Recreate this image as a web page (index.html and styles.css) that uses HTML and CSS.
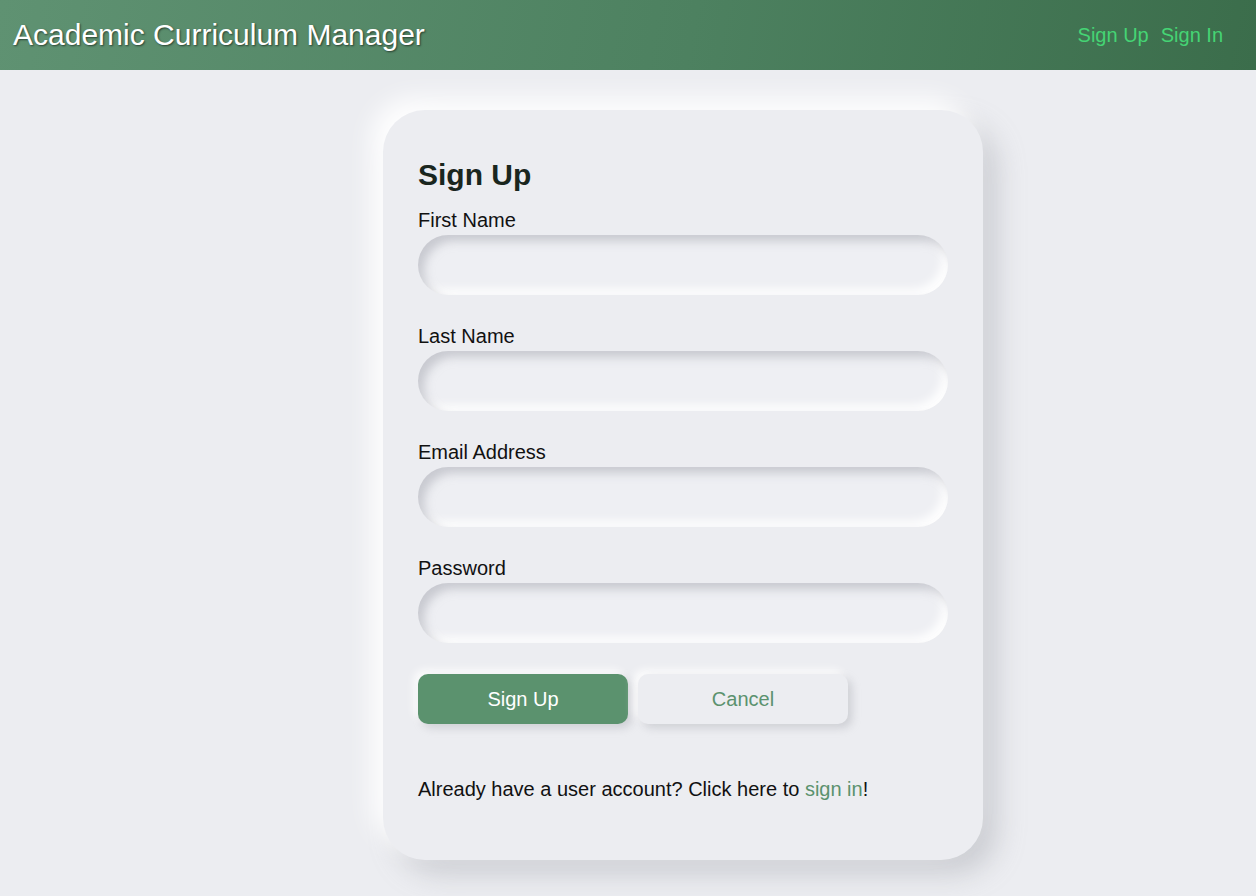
FILE: index.html
```html
<!DOCTYPE html>
<html lang="en">
<head>
<meta charset="utf-8">
<title>Academic Curriculum Manager</title>
<link rel="stylesheet" href="styles.css">
</head>
<body>
<header class="topbar">
  <div class="brand">Academic Curriculum Manager</div>
  <nav class="nav">
    <a href="#" class="nav-link">Sign Up</a>
    <a href="#" class="nav-link">Sign In</a>
  </nav>
</header>
<main class="main">
  <form class="card">
    <h2 class="card-title">Sign Up</h2>
    <div class="field">
      <label class="label">First Name</label>
      <input class="input" type="text">
    </div>
    <div class="field">
      <label class="label">Last Name</label>
      <input class="input" type="text">
    </div>
    <div class="field">
      <label class="label">Email Address</label>
      <input class="input" type="email">
    </div>
    <div class="field">
      <label class="label">Password</label>
      <input class="input" type="password">
    </div>
    <div class="actions">
      <button type="button" class="btn btn-primary">Sign Up</button>
      <button type="button" class="btn btn-secondary">Cancel</button>
    </div>
    <p class="footer-text">Already have a user account? Click here to <a href="#" class="link">sign in</a>!</p>
  </form>
</main>
</body>
</html>
```
FILE: styles.css
```css
* { box-sizing: border-box; }
html, body {
  margin: 0;
  padding: 0;
  background: #ecedf1;
  font-family: "Liberation Sans", Arial, sans-serif;
  color: #111;
}
.topbar {
  height: 70px;
  display: flex;
  align-items: center;
  justify-content: space-between;
  padding: 0 33px 0 13px;
  background: linear-gradient(100deg, #5f9272 0%, #4d8160 55%, #3b6d4b 100%);
}
.brand {
  color: #fff;
  font-size: 30px;
  text-shadow: 1px 1px 2px rgba(0,0,0,0.55);
  line-height: 1;
}
.nav {
  display: flex;
  gap: 12px;
}
.nav-link {
  color: #45d474;
  font-size: 20px;
  text-decoration: none;
}
.main {
  display: flex;
  justify-content: center;
  padding: 40px 0 36px 110px;
}
.card {
  width: 600px;
  height: 750px;
  border-radius: 42px;
  background: #ecedf1;
  padding: 48px 35px 35px;
  box-shadow: -12px -12px 24px rgba(255,255,255,0.95), 14px 14px 28px rgba(150,152,160,0.38);
  display: flex;
  flex-direction: column;
}
.card-title {
  margin: 0 0 16px;
  font-size: 30px;
  font-weight: bold;
  color: #1a261e;
  line-height: 34.5px;
}
.field {
  display: flex;
  flex-direction: column;
  margin-bottom: 30px;
}
.label {
  font-size: 20px;
  line-height: 23px;
  margin-bottom: 3px;
  color: #111;
}
.input {
  width: 530px;
  height: 60px;
  border: none;
  border-radius: 30px;
  background: #eeeff3;
  outline: none;
  box-shadow: inset 6px 6px 10px rgba(170,172,180,0.55), inset -6px -6px 10px rgba(255,255,255,0.95);
  font-size: 18px;
  padding: 0 24px;
}
.actions {
  display: flex;
  gap: 10px;
  margin-top: 1px;
}
.btn {
  width: 210px;
  height: 50px;
  border: none;
  border-radius: 10px;
  font-family: "Liberation Sans", Arial, sans-serif;
  font-size: 20px;
  padding: 2px 0 0;
  cursor: pointer;
  box-shadow: 4px 4px 8px rgba(160,162,170,0.4), -4px -4px 8px rgba(255,255,255,0.9);
}
.btn-primary {
  background: #5b926e;
  color: #fff;
}
.btn-secondary {
  background: #ecedf1;
  color: #5b926e;
}
.footer-text {
  margin: 54px 0 0;
  font-size: 20px;
  line-height: 23px;
  color: #111;
}
.link {
  color: #5b926e;
  text-decoration: none;
}
```
